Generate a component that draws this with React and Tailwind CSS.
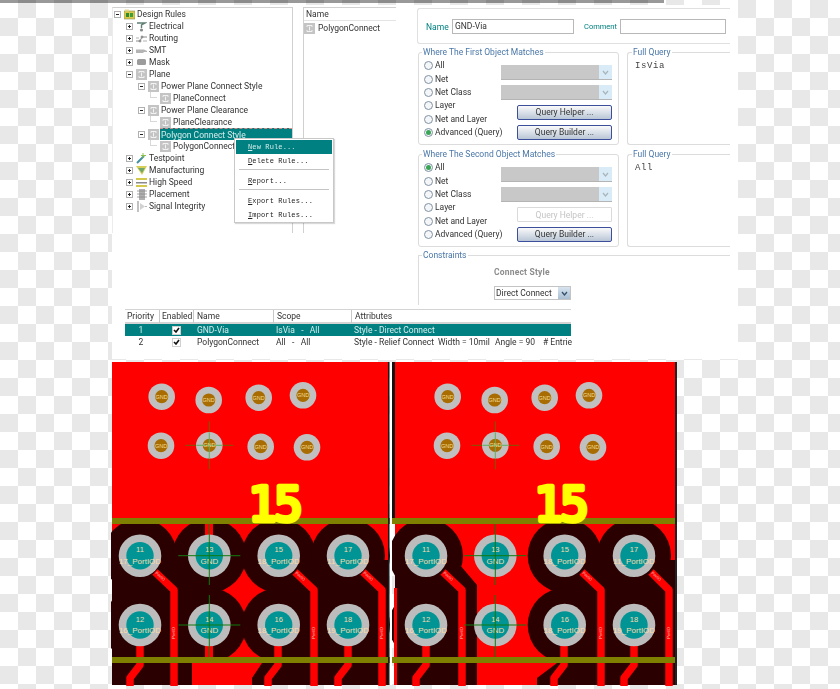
import React from 'react';

const levelPad = ['pl-[1px]', 'pl-[13px]', 'pl-[25px]', 'pl-[37px]'];

const treeRows = [
  { level: 0, label: 'Design Rules', icon: 'folder', exp: '-' },
  { level: 1, label: 'Electrical', icon: 'electrical', exp: '+' },
  { level: 1, label: 'Routing', icon: 'routing', exp: '+' },
  { level: 1, label: 'SMT', icon: 'smt', exp: '+' },
  { level: 1, label: 'Mask', icon: 'mask', exp: '+' },
  { level: 1, label: 'Plane', icon: 'rule', exp: '-' },
  { level: 2, label: 'Power Plane Connect Style', icon: 'rule', exp: '-' },
  { level: 3, label: 'PlaneConnect', icon: 'rule' },
  { level: 2, label: 'Power Plane Clearance', icon: 'rule', exp: '-' },
  { level: 3, label: 'PlaneClearance', icon: 'rule' },
  { level: 2, label: 'Polygon Connect Style', icon: 'rule', exp: '-', selected: true },
  { level: 3, label: 'PolygonConnect', icon: 'rule' },
  { level: 1, label: 'Testpoint', icon: 'testpoint', exp: '+' },
  { level: 1, label: 'Manufacturing', icon: 'manufacturing', exp: '+' },
  { level: 1, label: 'High Speed', icon: 'speed', exp: '+' },
  { level: 1, label: 'Placement', icon: 'placement', exp: '+' },
  { level: 1, label: 'Signal Integrity', icon: 'signal', exp: '+' },
];

function TreeIcon({ name }) {
  return (
    <svg width="11" height="11" viewBox="0 0 11 11" className="shrink-0">
      {name === 'rule' && (
        <g>
          <rect x="0" y="0" width="11" height="11" fill="#c4c4c4" />
          <path d="M3 4V2.5H8V4M3 7V8.5H8V7M5.5 3.5V7.5" stroke="#f2f2f2" strokeWidth="1" fill="none" />
        </g>
      )}
      {name === 'folder' && (
        <g>
          <rect x="0" y="2" width="11" height="8" fill="#d9c94a" stroke="#8a8a50" strokeWidth="0.6" />
          <rect x="1" y="0.5" width="4" height="2" fill="#e3d98a" />
          <rect x="2" y="4" width="3" height="4" fill="#2e8b2e" />
          <rect x="6" y="4" width="3" height="4" fill="#3c9c3c" />
        </g>
      )}
      {name === 'electrical' && (
        <g>
          <path d="M1 2H9L5.5 4V7" stroke="#5f7f73" strokeWidth="1.4" fill="none" />
          <circle cx="5.5" cy="9" r="1.6" fill="#8a8a8a" />
        </g>
      )}
      {name === 'routing' && (
        <g stroke="#808080" strokeWidth="0.9" fill="none">
          <path d="M0 8H4L6 4H11" />
          <path d="M0 5H3M7 8H11" stroke="#a8a8a8" />
          <circle cx="6" cy="4" r="1" fill="#b0b0b0" />
          <circle cx="4" cy="8" r="1" fill="#b0b0b0" />
        </g>
      )}
      {name === 'smt' && <path d="M0 4.5H8L11 6V7H8L7 8H0Z" fill="#b4b4b4" />}
      {name === 'mask' && <rect x="1" y="2" width="9" height="6" rx="1.5" fill="#9c9c9c" />}
      {name === 'testpoint' && (
        <g>
          <path d="M1 10L8 3" stroke="#3f8f9f" strokeWidth="2" />
          <path d="M7 0V5M5 2.5H10" stroke="#8bc34a" strokeWidth="1" />
        </g>
      )}
      {name === 'manufacturing' && (
        <g>
          <path d="M0 1H11L6 10Z" fill="#d8cf58" />
          <path d="M2 3H9L6 8Z" fill="#6fa86f" />
        </g>
      )}
      {name === 'speed' && (
        <g>
          <rect x="0" y="1" width="11" height="2" fill="#d5c94b" />
          <rect x="0" y="5" width="11" height="1.5" fill="#8a8a8a" />
          <rect x="0" y="8" width="11" height="2" fill="#d5c94b" />
        </g>
      )}
      {name === 'placement' && (
        <g>
          <rect x="3" y="0" width="6" height="11" fill="#b0b0b0" />
          <path d="M1 2H11M1 5H11M1 8H11" stroke="#8c8c8c" strokeWidth="0.8" />
        </g>
      )}
      {name === 'signal' && (
        <g>
          <rect x="1" y="0" width="2" height="11" fill="#c2c2c2" />
          <path d="M4 2L9 5.5L4 9Z" fill="#d2d2d2" />
          <path d="M9 5.5H11" stroke="#bbbbbb" />
        </g>
      )}
    </svg>
  );
}

function Expander({ mode }) {
  if (!mode) return <span className="w-[7px] h-[6px] self-start shrink-0 border-l border-b border-[#d8d8d8]" />;
  return (
    <span className="relative w-[7px] h-[7px] shrink-0 border border-[#b0b0b0] bg-white">
      <span className="absolute left-[1px] top-[2px] w-[3px] h-px bg-[#222]" />
      {mode === '+' && <span className="absolute left-[2px] top-[1px] w-px h-[3px] bg-[#222]" />}
    </span>
  );
}

function RuleTree() {
  return (
    <div className="relative w-[181px] h-[226px] border-t border-l border-r border-t-[#d0d0d0] border-r-[#d0d0d0] border-l-[#ececec]">
      {treeRows.map((row) => (
        <div key={row.label} className={`flex items-center h-[12px] ${levelPad[row.level]}`}>
          <Expander mode={row.exp} />
          <span className="w-[3px] shrink-0" />
          <TreeIcon name={row.icon} />
          {row.selected ? (
            <span className="ml-px flex-1 h-[12px] pl-px leading-[12px] bg-[#008080] text-[#d5ecec] border-t border-dashed border-[#d98a8a]">
              {row.label}
            </span>
          ) : (
            <span className="ml-[2px] leading-[12px] whitespace-nowrap text-[#333]">{row.label}</span>
          )}
        </div>
      ))}
    </div>
  );
}

const menuItems = [
  { label: 'New Rule...', key: 'N', rest: 'ew Rule...', active: true },
  { key: 'D', rest: 'elete Rule...', label: 'Delete Rule...' },
  { sep: true },
  { key: 'R', rest: 'eport...', label: 'Report...' },
  { sep: true },
  { key: 'E', rest: 'xport Rules...', label: 'Export Rules...' },
  { key: 'I', rest: 'mport Rules...', label: 'Import Rules...' },
];

function ContextMenu() {
  return (
    <div className="absolute left-[122px] top-[133px] w-[100px] h-[85px] bg-white border border-[#c8c8c8] p-px shadow-[1px_1px_1px_rgba(0,0,0,0.15)] font-['Liberation_Mono',monospace] text-[7px] text-[#222]">
      {menuItems.map((item, i) =>
        item.sep ? (
          <div key={i} className="h-px bg-[#c4c4c4] mx-[3px] mt-px mb-[4px]" />
        ) : (
          <div
            key={item.label}
            className={`h-[14px] leading-[14px] pl-[12px] tracking-[0.13px] ${item.active ? 'bg-[#008080] text-[#d5ecec]' : ''}`}
          >
            <span className="underline">{item.key}</span>
            {item.rest}
          </div>
        )
      )}
    </div>
  );
}

function RuleNames() {
  return (
    <div className="w-[93px] h-[226px] border-l border-t border-[#d0d0d0]">
      <div className="h-[13px] pl-[2px] leading-[13px] text-[#333] border-b border-[#e4e4e4]">Name</div>
      <div className="flex items-center h-[13px] pt-px gap-[3px]">
        <TreeIcon name="rule" />
        <span className="text-[#333]">PolygonConnect</span>
      </div>
    </div>
  );
}

function Radio({ label, checked }) {
  return (
    <div className="flex items-center h-[13.4px] gap-[2px]">
      <span className="flex shrink-0 items-center justify-center w-[9px] h-[9px] rounded-full border border-[#8193a5] bg-[#f4f6f8]">
        {checked && <span className="w-[5px] h-[5px] rounded-full bg-[#3aa655]" />}
      </span>
      <span className="text-[#333] whitespace-nowrap">{label}</span>
    </div>
  );
}

function DisabledSelect() {
  return (
    <div className="flex w-[111px] h-[15px] bg-[#c8c8c8] border-b border-[#b4b4b4]">
      <span className="ml-auto flex items-center justify-center w-[13px] bg-[#d9ebf6]">
        <svg width="7" height="5" viewBox="0 0 7 5">
          <path d="M1 1L3.5 4L6 1" stroke="#a8b4bc" strokeWidth="1.2" fill="none" />
        </svg>
      </span>
    </div>
  );
}

function QueryButton({ label, disabled }) {
  if (disabled) {
    return (
      <div className="w-[95px] h-[15px] leading-[14px] text-center border border-[#dadada] rounded-[1px] text-[#c4c4c4] bg-white">
        {label}
      </div>
    );
  }
  return (
    <div className="w-[95px] h-[15px] leading-[13px] text-center border border-[#3c4f9a] rounded-[2px] text-[#333] bg-gradient-to-b from-[#fafafa] to-[#b9c6d6]">
      {label}
    </div>
  );
}

const radioLabels = ['All', 'Net', 'Net Class', 'Layer', 'Net and Layer', 'Advanced (Query)'];

function ObjectMatch({ title, checked, helperDisabled, query }) {
  return (
    <div className="flex gap-[8px] ml-px">
      <fieldset className="w-[201px] h-[99px] border border-[#dcdcdc] rounded-[3px] px-[5px]">
        <legend className="-ml-[2px] px-px leading-[12px] text-[#4a77a8] whitespace-nowrap">{title}</legend>
        <div className="flex">
          <div className="w-[77px] pt-px">
            {radioLabels.map((r) => (
              <Radio key={r} label={r} checked={r === checked} />
            ))}
          </div>
          <div className="w-[111px] flex flex-col items-end gap-[5px] pt-[7px]">
            <DisabledSelect />
            <DisabledSelect />
            <QueryButton label="Query Helper ..." disabled={helperDisabled} />
            <QueryButton label="Query Builder ..." />
          </div>
        </div>
      </fieldset>
      <fieldset className="w-[103px] h-[99px] border border-r-0 border-[#dcdcdc] rounded-l-[3px] pl-[7px]">
        <legend className="-ml-[3px] px-px leading-[12px] text-[#4a77a8]">Full Query</legend>
        <div className="pt-[2px] font-['Liberation_Mono',monospace] text-[9px] tracking-[0.6px] text-[#444]">{query}</div>
      </fieldset>
    </div>
  );
}

function RuleForm() {
  return (
    <div className="w-[321px] pt-px">
      <div className="flex items-center w-[313px] h-[36px] border border-r-0 border-[#e0e0e0] rounded-l-[3px] pl-[8px]">
        <span className="w-[26px] pt-[2px] text-[#008080]">Name</span>
        <div className="w-[122px] h-[15px] leading-[13px] pl-[2px] border border-[#b8b8b8] text-[#333]">GND-Via</div>
        <span className="ml-[10px] w-[36px] pt-[2px] text-[7.5px] text-[#008080]">Comment</span>
        <div className="w-[106px] h-[15px] border border-[#b8b8b8]" />
      </div>
      <div className="flex flex-col gap-[3px] mt-[2px]">
        <ObjectMatch title="Where The First Object Matches" checked="Advanced (Query)" query="IsVia" />
        <ObjectMatch title="Where The Second Object Matches" checked="All" helperDisabled query="All" />
      </div>
      <fieldset className="ml-px mt-[2px] w-[312px] h-[56px] border-t border-l border-[#dcdcdc] pl-[75px]">
        <legend className="-ml-[72px] px-px leading-[12px] text-[#4a77a8]">Constraints</legend>
        <div className="pt-[5px] leading-[12px] font-bold text-[#8c8c8c] tracking-[0.2px]">Connect Style</div>
        <div className="flex items-center mt-[8px] w-[77px] h-[14px] border border-[#c4c4c4] pl-px text-[#333]">
          <span className="flex-1 whitespace-nowrap">Direct Connect</span>
          <span className="flex items-center justify-center w-[12px] h-[12px] bg-gradient-to-b from-[#d8e4ef] to-[#a9bfd2]">
            <svg width="7" height="5" viewBox="0 0 7 5">
              <path d="M1 1L3.5 4L6 1" stroke="#33506c" strokeWidth="1.3" fill="none" />
            </svg>
          </span>
        </div>
      </fieldset>
    </div>
  );
}

const tableCols = 'grid grid-cols-[34px_34px_80px_78px_220px]';

function Check() {
  return (
    <span className="flex items-center justify-center w-[9px] h-[9px] bg-white border border-[#d0d0d0]">
      <svg width="7" height="6" viewBox="0 0 7 6">
        <path d="M1 3L3 5L6 1" stroke="#111" strokeWidth="1.6" fill="none" />
      </svg>
    </span>
  );
}

function RuleTable() {
  const rows = [
    { pr: '1', name: 'GND-Via', scope: 'IsVia   -   All', attr: ['Style - Direct Connect'], active: true },
    { pr: '2', name: 'PolygonConnect', scope: 'All   -   All', attr: ['Style - Relief Connect', 'Width = 10mil', 'Angle = 90', '# Entrie'] },
  ];
  const attrWidths = ['w-[84px]', 'w-[57px]', 'w-[48px]', 'w-[27px]'];
  return (
    <div className="ml-[13px] mt-[4px] w-[446px] text-[#333]">
      <div className={`${tableCols} h-[15px] border-t border-b-2 border-[#d4d4d4] leading-[13px]`}>
        <span className="pl-[2px]">Priority</span>
        <span className="pl-[2px] border-l border-[#c8c8c8]">Enabled</span>
        <span className="pl-[3px] border-l border-[#c8c8c8]">Name</span>
        <span className="pl-[3px] border-l border-[#c8c8c8]">Scope</span>
        <span className="pl-[3px] border-l border-[#c8c8c8]">Attributes</span>
      </div>
      {rows.map((r) => (
        <div
          key={r.pr}
          className={`${tableCols} h-[12px] leading-[12px] whitespace-pre ${r.active ? 'bg-[#008080] text-[#d5ecec]' : ''}`}
        >
          <span className="text-center pr-[2px]">{r.pr}</span>
          <span className="flex items-center justify-center">
            <Check />
          </span>
          <span className="pl-[4px]">{r.name}</span>
          <span className="pl-[3px]">{r.scope}</span>
          <span className="flex pl-[3px]">
            {r.attr.map((a, i) => (
              <span key={a} className={r.attr.length > 1 ? attrWidths[i] : ''}>
                {a}
              </span>
            ))}
          </span>
        </div>
      ))}
    </div>
  );
}

const DARK = '#2a0000';
const RED = '#ff0000';
const GREEN = '#107a10';

function Via({ x, y, cross }) {
  return (
    <g>
      {cross && <path d={`M${x - 24} ${y}H${x + 24}M${x} ${y - 24}V${y + 24}`} stroke="#7a5a00" strokeWidth="1" />}
      <circle cx={x} cy={y} r="13.3" fill="#c0c0c0" />
      <circle cx={x} cy={y} r="6.6" fill="#a86c00" />
      {cross && <path d={`M${x - 13} ${y}H${x + 13}M${x} ${y - 13}V${y + 13}`} stroke="#5fb060" strokeWidth="1" />}
      <text x={x} y={y + 2} textAnchor="middle" fontSize="5.5" fill="#f4dc96" fontFamily="Liberation Sans, sans-serif">
        GND
      </text>
    </g>
  );
}

function Pad({ x, y, num, net }) {
  return (
    <g>
      <circle cx={x} cy={y} r="21.3" fill="#bcbcbc" />
      <circle cx={x} cy={y} r="13.7" fill="#009494" />
      <text x={x} y={y - 3.5} textAnchor="middle" fontSize="7.5" fill="#f8dcae" fontFamily="Liberation Sans, sans-serif">
        {num}
      </text>
      <text x={x} y={y + 8} textAnchor="middle" fontSize="8" fill="#f8dcae" fontFamily="Liberation Sans, sans-serif">
        {net}
      </text>
    </g>
  );
}

function TraceLabel({ x, y, angle = -90 }) {
  return (
    <text
      x={x}
      y={y}
      transform={`rotate(${angle} ${x} ${y})`}
      textAnchor="middle"
      dominantBaseline="middle"
      fontSize="4"
      fill="#ffd0c0"
      fontFamily="Liberation Sans, sans-serif"
    >
      PortIO
    </text>
  );
}

const rowY = [555.7, 625];
const netRows = [
  ['17_PortIOD', 'GND', '18_PortIOD', '11_PortIOD'],
  ['16_PortIOD', 'GND', '18_PortIOD', '19_PortIOD'],
];
const numRows = [
  ['11', '13', '15', '17'],
  ['12', '14', '16', '18'],
];

function Pads({ xs }) {
  return rowY.map((y, r) =>
    xs.map((x, c) => <Pad key={`${r}-${c}`} x={x} y={y} num={numRows[r][c]} net={netRows[r][c]} />)
  );
}

function Crosshair({ x }) {
  return (
    <path
      d={`M${x - 31} 555.7H${x + 31}M${x - 31} 625H${x + 31}M${x} 524V585M${x} 595V657`}
      stroke={GREEN}
      strokeWidth="1"
    />
  );
}

function PcbView() {
  const leftVias = [[161.7, 396.7], [208.7, 400], [258.7, 397.7], [303, 395.3], [161, 445.7], [209.3, 445.3], [260.7, 446.7], [307, 447.3]];
  const rightVias = [[447.7, 396.7], [494.7, 400], [544.7, 397.7], [589, 395.3], [447, 445.7], [495.3, 445.3], [546.7, 446.7], [593, 447.3]];
  const leftX = [140, 209.3, 278.7, 348];
  const rightX = [426, 495.3, 564.7, 634];
  const leftTraces = [
    'M155 572L174 590V686', 'M295 572L314 590V686', 'M363 572L382 590V686',
    'M140 646V665L130 678V686', 'M278 646V665L268 678V686', 'M348 646V665L338 678V686',
  ];
  const rightTraces = [
    'M443 572L462 590V686', 'M582 572L601 590V686', 'M651 572L669 590V686',
    'M426 646V665L416 678V686', 'M564 646V665L554 678V686', 'M634 646V665L624 678V686',
  ];
  const diagLabels = [160, 300, 368, 448, 587, 656];
  const vertLabels = [174, 314, 382, 462, 601, 669];
  return (
    <svg width="567" height="327" viewBox="111 361 567 327" className="block">
      <rect x="112" y="362" width="276" height="323" fill={RED} />
      <rect x="395" y="362" width="280" height="323" fill={RED} />

      {/* left board, thermal relief on the GND pads */}
      {leftX.flatMap((x) => rowY.map((y) => <circle key={`${x}${y}`} cx={x} cy={y} r="37" fill={DARK} />))}
      <rect x="112" y="560" width="88" height="97" fill={DARK} />
      <rect x="285" y="560" width="103" height="97" fill={DARK} />
      <path d="M112 657H192V685H112ZM262 657H388V685H252V678L262 663Z" fill={DARK} />
      <path d="M205 524H213V538H205ZM205 642H213V657H205Z" fill={RED} />
      {leftTraces.map((d) => <path key={d} d={d} stroke={RED} strokeWidth="7.5" fill="none" strokeLinejoin="round" />)}

      {/* right board, GND pads joined to the plane */}
      {[426, 564.7, 634].flatMap((x) => rowY.map((y) => <circle key={`${x}${y}`} cx={x} cy={y} r="37" fill={DARK} />))}
      <path d="M395 536L426 556L460 565L477 585V685H395Z" fill={DARK} />
      <rect x="565" y="560" width="110" height="97" fill={DARK} />
      <path d="M557 657H675V685H537V678L557 663Z" fill={DARK} />
      {rightTraces.map((d) => <path key={d} d={d} stroke={RED} strokeWidth="7.5" fill="none" strokeLinejoin="round" />)}
      <rect x="394" y="588" width="3" height="97" fill={RED} />

      {diagLabels.map((x) => <TraceLabel key={x} x={x} y="576.5" angle={44} />)}
      {vertLabels.map((x) => <TraceLabel key={x} x={x} y="633" />)}

      <rect x="112" y="518" width="563" height="6" fill="#808000" />
      <rect x="112" y="657" width="563" height="6" fill="#808000" />

      {leftVias.map(([x, y], i) => <Via key={i} x={x} y={y} cross={i === 5} />)}
      {rightVias.map(([x, y], i) => <Via key={i} x={x} y={y} cross={i === 5} />)}
      <Pads xs={leftX} />
      <Pads xs={rightX} />
      <Crosshair x={209.3} />
      <Crosshair x={495.3} />

      {[274, 560].map((x) => (
        <text
          key={x}
          x={x}
          y="520.5"
          textAnchor="middle"
          fontSize="48"
          letterSpacing="-3"
          fontFamily="DejaVu Sans Mono, monospace"
          fill="#ffff00"
          stroke="#ffff00"
          strokeWidth="4.5"
          strokeLinejoin="round"
        >
          15
        </text>
      ))}

      <rect x="388" y="362" width="1.5" height="323" fill="#1a1a1a" />
      <rect x="390" y="362" width="2" height="323" fill="#ffffff" />
      <rect x="392" y="362" width="3" height="156" fill="#111111" />
      <rect x="675" y="362" width="2" height="323" fill="#222222" />
    </svg>
  );
}

export default function App() {
  return (
    <div className="w-[840px] h-[689px] overflow-hidden bg-[repeating-conic-gradient(#e8e8e8_0_25%,#ffffff_0_50%)] bg-[length:36px_36px] font-['Roboto',sans-serif] text-[8.5px]">
      <div className="w-[664px] h-[3px] bg-black/40" />
      <div className="relative ml-[112px] mt-[2px] w-[626px] h-[354px] pt-[2px] bg-white blur-[0.35px]">
        <div className="flex h-[298px]">
          <RuleTree />
          <div className="w-[10px]" />
          <RuleNames />
          <div className="w-[21px]" />
          <RuleForm />
        </div>
        <RuleTable />
        <ContextMenu />
      </div>
      <div className="mt-[2px] ml-[111px]">
        <PcbView />
      </div>
    </div>
  );
}
